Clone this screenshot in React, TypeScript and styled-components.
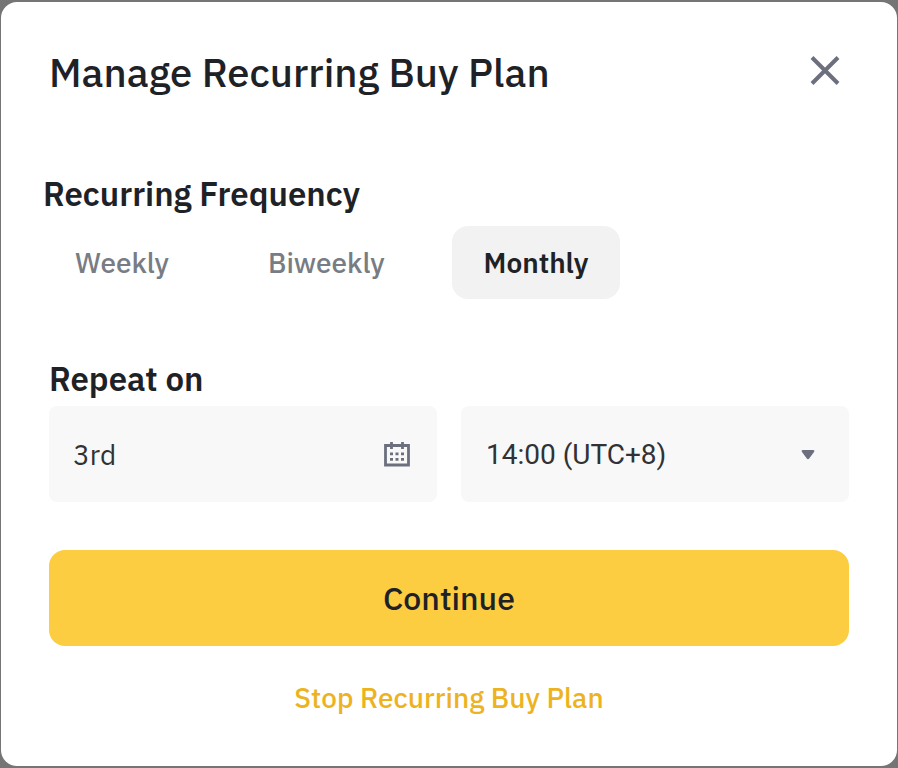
import { useState } from "react";
import styled, { createGlobalStyle } from "styled-components";

const color = {
  ink: "#1e2226",
  field: "#303236",
  muted: "#787c84",
  icon: "#6c707e",
  surface: "#f8f8f8",
  selected: "#f2f2f2",
  yellow: "#fccd41",
  gold: "#edb31f",
};

const GlobalStyle = createGlobalStyle`
  *, *::before, *::after { box-sizing: border-box; }
  body {
    margin: 0;
    background: #757575;
    color: ${color.ink};
    font-family: "IBM Plex Sans", "Noto Sans", sans-serif;
  }
  button, input, select { font: inherit; color: inherit; }
`;

const Page = styled.main`
  display: flex;
  min-height: 100vh;
  padding: 2px 1px;
`;

const Dialog = styled.section`
  flex: 1;
  min-width: 0;
  padding: 40px 48px 32px;
  border-radius: 16px;
  background: #fff;
`;

const Header = styled.header`
  display: flex;
  align-items: center;
  justify-content: space-between;
  height: 60px;
`;

const Title = styled.h1`
  margin: 0;
  font-size: 40px;
  line-height: 60px;
  font-weight: 500;
`;

const CloseButton = styled.button`
  display: flex;
  padding: 4px 8px 8px;
  border: 0;
  background: none;
  cursor: pointer;
`;

const FrequencySection = styled.section`
  margin: 72px 0 0 -6px;
`;

const SectionTitle = styled.h2`
  margin: 0;
  font-size: 33px;
  line-height: 40px;
  font-weight: 600;
`;

const Options = styled.div`
  display: flex;
  flex-wrap: wrap;
  gap: 35px;
  margin-top: 12px;
`;

const Option = styled.button<{ $selected: boolean }>`
  height: 73px;
  padding: 0 32px;
  border: 0;
  border-radius: 16px;
  background: ${(p) => (p.$selected ? color.selected : "transparent")};
  color: ${(p) => (p.$selected ? color.ink : color.muted)};
  font-size: 28px;
  font-weight: ${(p) => (p.$selected ? 600 : 500)};
  cursor: pointer;
`;

const RepeatSection = styled.section`
  margin-top: 60px;
`;

const Fields = styled.div`
  display: grid;
  grid-template-columns: 1fr 1fr;
  gap: 24px;
  margin-top: 7px;
`;

const Field = styled.label`
  display: grid;
  grid-template-columns: minmax(0, 1fr) auto;
  align-items: center;
  height: 96px;
  padding: 0 27px 0 24px;
  border-radius: 8px;
  background: ${color.surface};
  color: ${color.field};
  font-size: 28px;

  svg { pointer-events: none; }
`;

const DayInput = styled.input`
  width: 100%;
  height: 96px;
  padding: 0;
  border: 0;
  outline: 0;
  background: none;
`;

const TimeSelect = styled.select`
  width: 100%;
  height: 96px;
  padding: 0;
  border: 0;
  outline: 0;
  background: none;
  appearance: none;
`;

const ContinueButton = styled.button`
  display: block;
  width: 100%;
  height: 96px;
  margin-top: 48px;
  border: 0;
  border-radius: 16px;
  background: ${color.yellow};
  font-size: 32px;
  font-weight: 500;
  cursor: pointer;
`;

const StopButton = styled.button`
  display: block;
  margin: 32px auto 0;
  padding: 0;
  border: 0;
  background: none;
  color: ${color.gold};
  font-size: 28px;
  line-height: 40px;
  font-weight: 500;
  cursor: pointer;
`;

const CloseIcon = () => (
  <svg width="32" height="32" viewBox="0 0 32 32" fill="none" stroke={color.icon} strokeWidth="4" aria-hidden="true">
    <path d="M3 3.500 29 29.500M29 3.500 3 29.500" />
  </svg>
);

const CalendarIcon = () => (
  <svg width="26" height="26" viewBox="0 0 26 26" fill="none" stroke={color.icon} aria-hidden="true">
    <path d="M1.5 4.5h23v19.5h-23z" strokeWidth="2.8" />
    <path d="M7.5 1v7M18.500 1v7" strokeWidth="2.8" />
    <path d="M6 12.8h3M11.5 12.8h3M17 12.8h3M6 18.3h3M11.5 18.3h3M17 18.3h3" strokeWidth="2.8" />
  </svg>
);

const ArrowIcon = () => (
  <svg width="14" height="12" viewBox="0 0 14 12" fill={color.icon} aria-hidden="true">
    <path d="M2 2h10c1.400 0 1.700 1 1 1.900L8.200 10.500c-.7.900-1.700.900-2.400 0L1 3.900C.3 3 .6 2 2 2z" />
  </svg>
);

const TimeField = styled(Field)`
  padding: 0 34px 0 25px;
  font-family: Roboto, sans-serif;
`;

const frequencies = ["Weekly", "Biweekly", "Monthly"];

export default function App() {
  const [frequency, setFrequency] = useState("Monthly");

  return (
    <>
      <GlobalStyle />
      <Page>
        <Dialog role="dialog" aria-labelledby="plan-title">
          <Header>
            <Title id="plan-title">Manage Recurring Buy Plan</Title>
            <CloseButton type="button" aria-label="Close">
              <CloseIcon />
            </CloseButton>
          </Header>

          <FrequencySection>
            <SectionTitle id="frequency-title">Recurring Frequency</SectionTitle>
            <Options role="group" aria-labelledby="frequency-title">
              {frequencies.map((name) => (
                <Option
                  key={name}
                  type="button"
                  $selected={name === frequency}
                  aria-pressed={name === frequency}
                  onClick={() => setFrequency(name)}
                >
                  {name}
                </Option>
              ))}
            </Options>
          </FrequencySection>

          <RepeatSection>
            <SectionTitle>Repeat on</SectionTitle>
            <Fields>
              <Field>
                <DayInput type="text" aria-label="Day of the month" defaultValue="3rd" />
                <CalendarIcon />
              </Field>
              <TimeField>
                <TimeSelect aria-label="Time" defaultValue="14:00">
                  <option value="14:00">14:00 (UTC+8)</option>
                </TimeSelect>
                <ArrowIcon />
              </TimeField>
            </Fields>
          </RepeatSection>

          <ContinueButton type="button">Continue</ContinueButton>
          <StopButton type="button">Stop Recurring Buy Plan</StopButton>
        </Dialog>
      </Page>
    </>
  );
}
